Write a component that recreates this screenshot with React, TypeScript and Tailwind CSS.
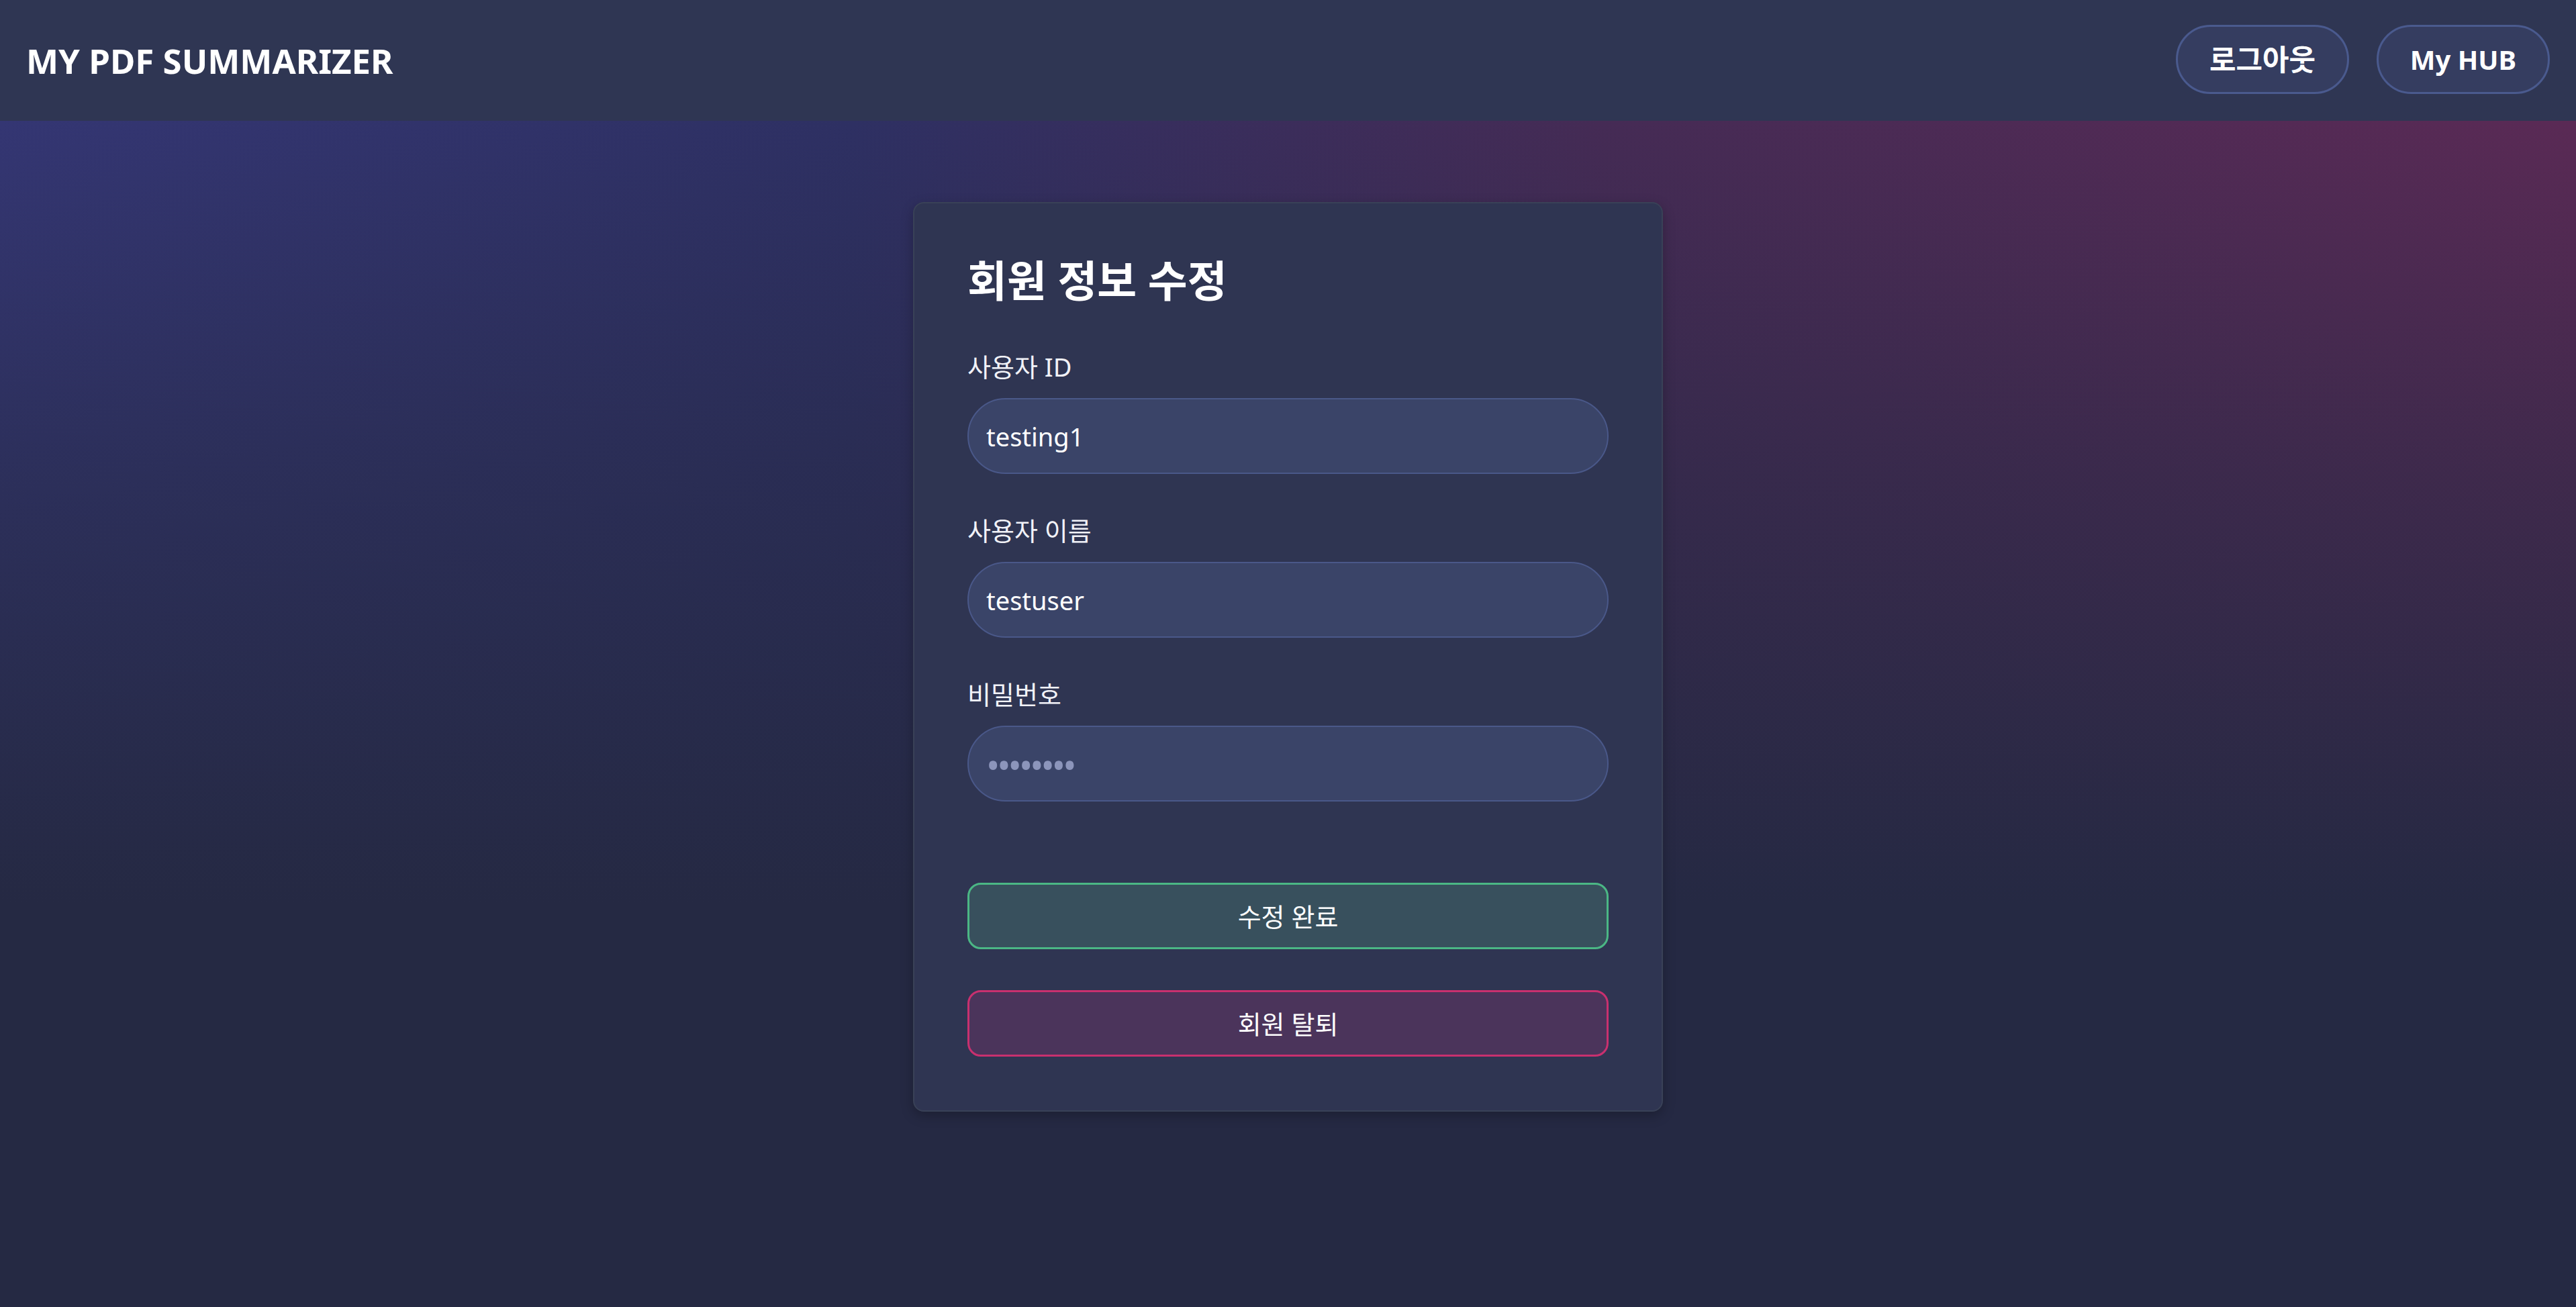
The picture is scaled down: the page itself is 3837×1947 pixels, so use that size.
export default function App() {
  const fields = [
    { label: "사용자 ID", value: "testing1", type: "text" },
    { label: "사용자 이름", value: "testuser", type: "text" },
    { label: "비밀번호", value: "", type: "password" },
  ];

  return (
    <div className="min-h-screen flex flex-col bg-[#252943] text-white font-[family-name:'Noto_Sans','Noto_Sans_CJK_KR',sans-serif]">
      {/* Header */}
      <header className="h-[180px] shrink-0 flex items-center justify-between pl-[39px] pr-[39px] bg-[#2f3653]">
        <h1 className="text-[51px] font-bold leading-none">MY PDF SUMMARIZER</h1>
        <div className="flex items-center gap-[41px] mt-[-3px]">
          <button className="w-[258px] h-[103px] rounded-full border-[3px] border-[#4a5a8e] bg-[#353d60] text-[43px] font-bold leading-none">
            로그아웃
          </button>
          <button className="w-[258px] h-[103px] rounded-full border-[3px] border-[#4a5a8e] bg-[#353d60] text-[40px] font-bold leading-none">
            My HUB
          </button>
        </div>
      </header>

      {/* Main */}
      <main className="flex-1 pt-[121px] pb-[200px] bg-[linear-gradient(to_bottom,rgba(37,41,67,0)_0%,rgba(37,41,67,0.5)_30%,#252943_66%),linear-gradient(to_right,#343673_0%,#2e3063_33%,#452b55_62%,#5a2a55_100%)]">
        <div className="w-[1117px] mx-auto rounded-[16px] border-2 border-[#394157] bg-[#2f3552] shadow-[0_6px_18px_rgba(0,0,0,0.25)] px-[79px] pt-[79px] pb-[80px]">
          <h2 className="text-[64px] font-bold leading-[72px] mb-[70px]">회원 정보 수정</h2>

          <div className="flex flex-col gap-[62px]">
            {fields.map((f) => (
              <div key={f.label} className="flex flex-col">
                <label className="text-[38px] leading-[44px] mb-[25px] text-[#f1f2f8]">{f.label}</label>
                {f.type === "password" ? (
                  <input
                    type="password"
                    placeholder="••••••••"
                    className="h-[113px] w-full rounded-full border-2 border-[#4a5889] bg-[#3a4468] px-[26px] pt-[14px] text-[38px] text-white outline-none placeholder:text-[#8c95bb] placeholder:text-[54px] placeholder:tracking-[-4px]"
                  />
                ) : (
                  <input
                    type="text"
                    defaultValue={f.value}
                    className="h-[113px] w-full rounded-full border-2 border-[#4a5889] bg-[#3a4468] px-[26px] text-[38px] text-white outline-none"
                  />
                )}
              </div>
            ))}
          </div>

          <div className="flex flex-col gap-[61px] mt-[121px]">
            <button className="h-[99px] w-full rounded-[20px] border-[3px] border-[#4bb785] bg-[#38505d] text-[38px] leading-none">
              수정 완료
            </button>
            <button className="h-[99px] w-full rounded-[20px] border-[3px] border-[#c9306f] bg-[#4b345b] text-[38px] leading-none">
              회원 탈퇴
            </button>
          </div>
        </div>
      </main>
    </div>
  );
}
